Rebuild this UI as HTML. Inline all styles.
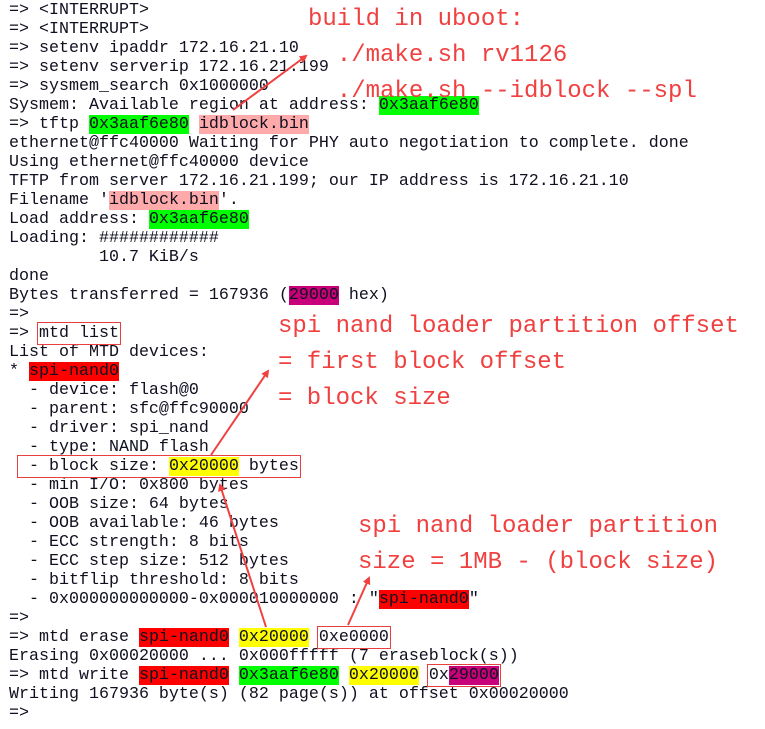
<!DOCTYPE html>
<html><head><meta charset="utf-8"><style>
body{margin:0;background:#fff;width:765px;height:729px;overflow:hidden;position:relative}
pre{position:absolute;left:9px;top:1px;margin:0;font-family:"Liberation Mono",monospace;font-size:16.67px;line-height:19px;color:#101020}
.g{background:#00ff00}.p{background:#ffaaaa}.r{background:#ff0000}.y{background:#ffff00}.m{background:#c8007a}
.b{outline:1.5px solid #e84040;outline-offset:1px}
.a{position:absolute;font-family:"Liberation Mono",monospace;font-size:24px;color:#f04040;white-space:pre;line-height:36px}
svg{position:absolute;left:0;top:0}
</style></head><body>
<pre>=&gt; &lt;INTERRUPT&gt;
=&gt; &lt;INTERRUPT&gt;
=&gt; setenv ipaddr 172.16.21.10
=&gt; setenv serverip 172.16.21.199
=&gt; sysmem_search 0x1000000
Sysmem: Available region at address: <span class="g">0x3aaf6e80</span>
=&gt; tftp <span class="g">0x3aaf6e80</span> <span class="p">idblock.bin</span>
ethernet@ffc40000 Waiting for PHY auto negotiation to complete. done
Using ethernet@ffc40000 device
TFTP from server 172.16.21.199; our IP address is 172.16.21.10
Filename '<span class="p">idblock.bin</span>'.
Load address: <span class="g">0x3aaf6e80</span>
Loading: ############
         10.7 KiB/s
done
Bytes transferred = 167936 (<span class="m">29000</span> hex)
=&gt;
=&gt; <span class="b">mtd list</span>
List of MTD devices:
* <span class="r">spi-nand0</span>
  - device: flash@0
  - parent: sfc@ffc90000
  - driver: spi_nand
  - type: NAND flash
 <span class="b"> - block size: <span class="y">0x20000</span> bytes</span>
  - min I/O: 0x800 bytes
  - OOB size: 64 bytes
  - OOB available: 46 bytes
  - ECC strength: 8 bits
  - ECC step size: 512 bytes
  - bitflip threshold: 8 bits
  - 0x000000000000-0x000010000000 : "<span class="r">spi-nand0</span>"
=&gt;
=&gt; mtd erase <span class="r">spi-nand0</span> <span class="y">0x20000</span> <span class="b">0xe0000</span>
Erasing 0x00020000 ... 0x000fffff (7 eraseblock(s))
=&gt; mtd write <span class="r">spi-nand0</span> <span class="g">0x3aaf6e80</span> <span class="y">0x20000</span> <span class="b">0x<span class="m">29000</span></span>
Writing 167936 byte(s) (82 page(s)) at offset 0x00020000
=&gt;</pre>
<div class="a" style="left:308px;top:2px">build in uboot:
  ./make.sh rv1126
  ./make.sh --idblock --spl</div>
<div class="a" style="left:278px;top:309px">spi nand loader partition offset
= first block offset
= block size</div>
<div class="a" style="left:358px;top:509px">spi nand loader partition
size = 1MB - (block size)</div>
<svg width="765" height="729">
<defs><marker id="h" markerWidth="8" markerHeight="8" refX="6" refY="4" orient="auto" markerUnits="userSpaceOnUse"><path d="M0,0 L8,4 L0,8 z" fill="#f04040" transform="scale(1.6) translate(-3,-1.5)"/></marker></defs>
<g stroke="#f04040" stroke-width="2" fill="none">
<line x1="233" y1="110" x2="306" y2="56" marker-end="url(#h)"/>
<line x1="211" y1="455" x2="268" y2="371" marker-end="url(#h)"/>
<line x1="266" y1="627" x2="220" y2="485" marker-end="url(#h)"/>
<line x1="348" y1="625" x2="369" y2="578" marker-end="url(#h)"/>
</g>
</svg>
</body></html>
